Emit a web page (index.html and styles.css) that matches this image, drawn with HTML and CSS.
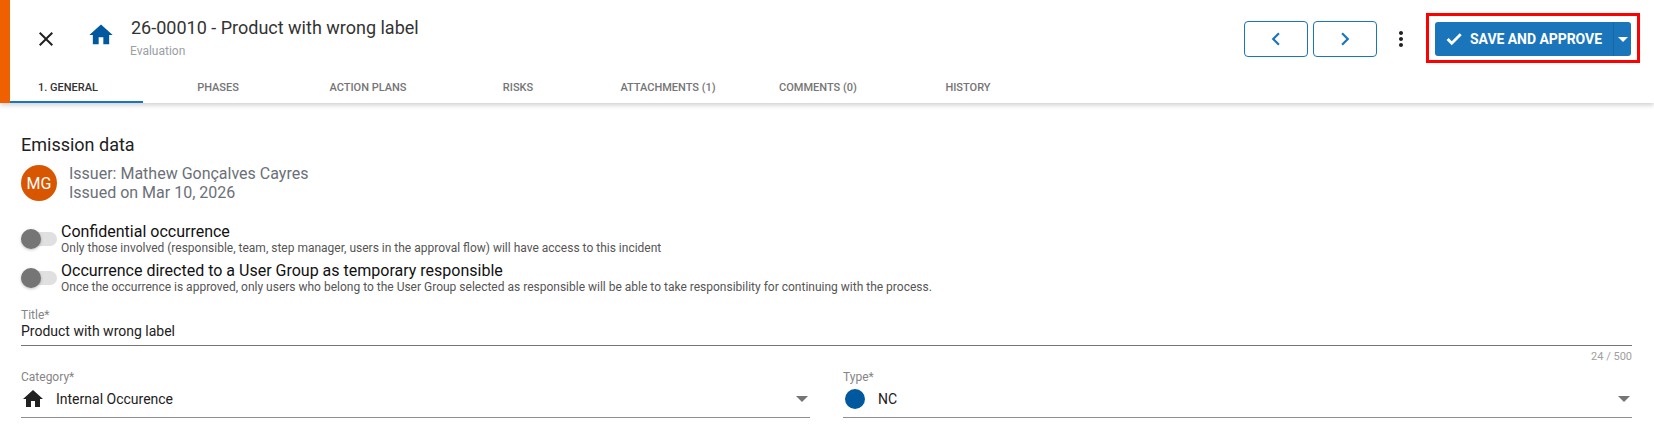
FILE: index.html
```html
<!DOCTYPE html>
<html>
<head>
  <title>Occurrence</title>
  <link rel="stylesheet" href="styles.css">
</head>
<body>
  <div class="header">
    <div class="top-row">
      <button class="close-btn">
        <svg width="24" height="24" viewBox="0 0 24 24"><path fill="#212121" d="M19 6.41 17.59 5 12 10.59 6.41 5 5 6.41 10.59 12 5 17.59 6.41 19 12 13.41 17.59 19 19 17.59 13.41 12z"/></svg>
      </button>
      <svg class="home-icon" width="28" height="28" viewBox="0 0 24 24"><path fill="#00589f" d="M10 20v-6h4v6h5v-8h3L12 3 2 12h3v8z"/></svg>
      <div class="title-block">
        <div class="main-title">26-00010 - Product with wrong label</div>
        <div class="sub-title">Evaluation</div>
      </div>
      <div class="actions">
        <button class="nav-btn">
          <svg width="26" height="26" viewBox="0 0 24 24"><path fill="#1b75bb" d="M15.41 7.41 14 6l-6 6 6 6 1.41-1.41L10.83 12z"/></svg>
        </button>
        <button class="nav-btn">
          <svg width="26" height="26" viewBox="0 0 24 24"><path fill="#1b75bb" d="M10 6 8.59 7.41 13.17 12l-4.58 4.59L10 18l6-6z"/></svg>
        </button>
        <button class="more-btn">
          <svg width="24" height="24" viewBox="0 0 24 24"><path fill="#212121" d="M12 8c1.1 0 2-.9 2-2s-.9-2-2-2-2 .9-2 2 .9 2 2 2zm0 2c-1.1 0-2 .9-2 2s.9 2 2 2 2-.9 2-2-.9-2-2-2zm0 6c-1.1 0-2 .9-2 2s.9 2 2 2 2-.9 2-2-.9-2-2-2z"/></svg>
        </button>
        <div class="highlight">
          <button class="save-btn">
            <svg width="18" height="18" viewBox="0 0 24 24"><path fill="#fff" stroke="#fff" stroke-width="1.8" d="M9 16.17 4.83 12l-1.42 1.41L9 19 21 7l-1.41-1.41z"/></svg>
            SAVE AND APPROVE
          </button>
          <button class="save-arrow"><span class="caret white"></span></button>
        </div>
      </div>
    </div>
    <div class="tabs">
      <div class="tab first active">1. GENERAL</div>
      <div class="tab">PHASES</div>
      <div class="tab">ACTION PLANS</div>
      <div class="tab">RISKS</div>
      <div class="tab">ATTACHMENTS (1)</div>
      <div class="tab">COMMENTS (0)</div>
      <div class="tab">HISTORY</div>
    </div>
  </div>

  <div class="content">
    <h2>Emission data</h2>
    <div class="issuer">
      <div class="avatar">MG</div>
      <div class="issuer-text">
        <div>Issuer: Mathew Gonçalves Cayres</div>
        <div>Issued on Mar 10, 2026</div>
      </div>
    </div>

    <div class="switch-row first-switch">
      <div class="switch"><span class="thumb"></span></div>
      <div>
        <div class="switch-label">Confidential occurrence</div>
        <div class="switch-hint">Only those involved (responsible, team, step manager, users in the approval flow) will have access to this incident</div>
      </div>
    </div>
    <div class="switch-row">
      <div class="switch"><span class="thumb"></span></div>
      <div>
        <div class="switch-label">Occurrence directed to a User Group as temporary responsible</div>
        <div class="switch-hint">Once the occurrence is approved, only users who belong to the User Group selected as responsible will be able to take responsibility for continuing with the process.</div>
      </div>
    </div>

    <div class="field title-field">
      <label>Title*</label>
      <div class="value">Product with wrong label</div>
    </div>
    <div class="counter">24 / 500</div>

    <div class="field-row">
      <div class="field select-field">
        <label>Category*</label>
        <div class="value">
          <svg class="value-icon" width="24" height="24" viewBox="0 0 24 24"><path fill="#212121" d="M10 20v-6h4v6h5v-8h3L12 3 2 12h3v8z"/></svg>
          <span>Internal Occurence</span>
          <span class="caret"></span>
        </div>
      </div>
      <div class="field select-field">
        <label>Type*</label>
        <div class="value">
          <span class="dot"></span>
          <span>NC</span>
          <span class="caret"></span>
        </div>
      </div>
    </div>
  </div>
</body>
</html>
```

FILE: styles.css
```css
* {
  box-sizing: border-box;
}

body {
  margin: 0;
  height: 426px;
  overflow: hidden;
  background-color: #fff;
  font-family: Roboto, sans-serif;
}

button {
  background: none;
  border: none;
  padding: 0;
  font-family: inherit;
  cursor: pointer;
}

/* header */
.header {
  height: 103px;
  border-left: 10px solid #ef6100;
  background-color: #fff;
  box-shadow: 0 2px 5px rgba(0, 0, 0, 0.2);
}

.top-row {
  display: flex;
  align-items: center;
  height: 70px;
  padding-top: 8px;
}

.close-btn {
  display: flex;
  margin-left: 24px;
}

.home-icon {
  margin-left: 29px;
  margin-top: -8px;
}

.title-block {
  align-self: flex-start;
  margin-left: 16px;
  margin-top: 8px;
}

.main-title {
  font-size: 18px;
  line-height: 24px;
  color: #333;
}

.sub-title {
  font-size: 12px;
  line-height: 14px;
  margin-top: 4px;
  margin-left: -1px;
  color: #9aa0a6;
}

.actions {
  display: flex;
  align-items: center;
  margin-left: auto;
  margin-right: 14px;
}

.nav-btn {
  display: flex;
  align-items: center;
  justify-content: center;
  width: 64px;
  height: 36px;
  margin-left: 5px;
  border: 1px solid #1b75bb;
  border-radius: 4px;
}

.more-btn {
  display: flex;
  margin-left: 12px;
}

.highlight {
  display: flex;
  height: 50px;
  margin-left: 13px;
  margin-top: -2px;
  padding: 6px 6px 4px;
  border: 3px solid #f00;
}

.save-btn {
  display: flex;
  align-items: center;
  gap: 7px;
  width: 178px;
  padding-left: 10px;
  background-color: #1b75bb;
  border-radius: 3px 0 0 3px;
  color: #fff;
  font-size: 14px;
  font-weight: 700;
  letter-spacing: -0.05px;
}

.save-arrow {
  display: flex;
  align-items: center;
  justify-content: center;
  width: 18px;
  background-color: #1b75bb;
  border-left: 1px solid #1868a8;
  border-radius: 0 3px 3px 0;
}

.caret {
  width: 0;
  height: 0;
  border-left: 6px solid transparent;
  border-right: 6px solid transparent;
  border-top: 6px solid #757575;
}

.caret.white {
  border-left-width: 5px;
  border-right-width: 5px;
  border-top: 5px solid #fff;
}

.tabs {
  display: flex;
  height: 33px;
}

.tab {
  width: 150px;
  padding-top: 11px;
  text-align: center;
  font-size: 11px;
  font-weight: 500;
  color: #757575;
}

.tab.first {
  width: 133px;
  padding-left: 28px;
  text-align: left;
}

.tab.active {
  color: #333;
  border-bottom: 2px solid #1b75bb;
}

/* body */
.content {
  padding: 31px 22px 0 21px;
}

h2 {
  margin: 0;
  font-size: 18px;
  font-weight: 400;
  line-height: 22px;
  color: #212121;
}

.issuer {
  display: flex;
  align-items: center;
  gap: 12px;
  margin-top: 8px;
}

.avatar {
  display: flex;
  align-items: center;
  justify-content: center;
  width: 36px;
  height: 36px;
  border-radius: 50%;
  background-color: #d95600;
  color: #fff;
  font-size: 16px;
}

.issuer-text {
  font-size: 16px;
  line-height: 19px;
  color: #6b7078;
}

.switch-row {
  display: flex;
  align-items: center;
  gap: 4px;
  height: 39px;
}

.first-switch {
  margin-top: 18px;
}

.switch {
  position: relative;
  width: 36px;
  height: 14px;
  margin-top: -1px;
  flex-shrink: 0;
  border-radius: 7px;
  background-color: #e0e0e0;
}

.thumb {
  position: absolute;
  left: 0;
  top: -3px;
  width: 20px;
  height: 20px;
  border-radius: 50%;
  background-color: #757575;
  box-shadow: 0 1px 3px rgba(0, 0, 0, 0.25);
}

.switch-label {
  font-size: 16px;
  line-height: 18px;
  color: #111;
}

.switch-hint {
  font-size: 12px;
  line-height: 15px;
  color: #555;
}

.field label {
  display: block;
  font-size: 12px;
  line-height: 14px;
  color: #858585;
}

.title-field {
  margin-top: 10px;
  border-bottom: 1px solid #757575;
}

.title-field .value {
  font-size: 14px;
  line-height: 20px;
  height: 24px;
  margin-top: -1px;
  color: #212121;
}

.counter {
  margin-top: 5px;
  text-align: right;
  font-size: 11px;
  line-height: 12px;
  color: #a0a0a0;
}

.field-row {
  display: flex;
  gap: 33px;
  margin-top: 7px;
}

.select-field {
  flex: 1;
  border-bottom: 1px solid #8f8f8f;
}

.select-field .value {
  display: flex;
  align-items: center;
  height: 33px;
  padding-bottom: 3px;
  font-size: 14px;
  color: #212121;
}

.value-icon {
  margin-right: 11px;
}

.dot {
  width: 20px;
  height: 20px;
  margin: 0 13px 0 2px;
  border-radius: 50%;
  background-color: #00589f;
}

.select-field .caret {
  margin-left: auto;
  margin-right: 2px;
}
```
